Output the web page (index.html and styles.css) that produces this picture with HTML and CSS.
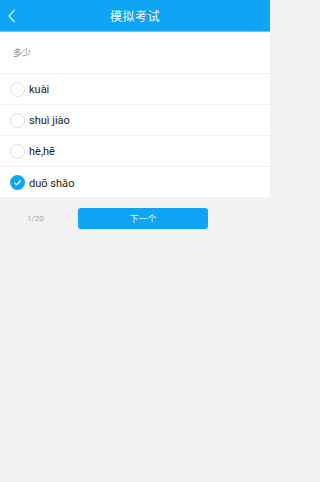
FILE: index.html
```html
<!DOCTYPE html>
<html lang="zh">
<head>
<meta charset="utf-8">
<link rel="stylesheet" href="styles.css">
</head>
<body>
<div class="app">
  <header class="topbar">
    <svg class="back" width="10" height="16" viewBox="0 0 10 16"><path d="M7.5 2 L2 8 L7.5 14" fill="none" stroke="#cfeeff" stroke-width="1.3"/></svg>
    <div class="title">模拟考试</div>
  </header>
  <div class="question">多少</div>
  <ul class="options">
    <li class="opt"><span class="radio"></span><span class="label">kuài</span></li>
    <li class="opt"><span class="radio"></span><span class="label">shuì jiào</span></li>
    <li class="opt"><span class="radio"></span><span class="label">hè,hē</span></li>
    <li class="opt"><span class="radio checked"><svg width="15" height="15" viewBox="0 0 15 15"><path d="M4.2 7.6 L6.6 9.9 L10.9 5.3" fill="none" stroke="#fff" stroke-width="1.3"/></svg></span><span class="label">duō shǎo</span></li>
  </ul>
  <div class="footer">
    <span class="count">1/20</span>
    <button class="next">下一个</button>
  </div>
</div>
</body>
</html>
```
FILE: styles.css
```css
html, body {
  margin: 0;
  padding: 0;
  background: #f2f2f2;
  font-family: Roboto, "Noto Sans", "Noto Sans CJK SC", sans-serif;
}
.app {
  width: 270px;
  height: 482px;
  display: flex;
  flex-direction: column;
  background: #f2f2f2;
}
.topbar {
  height: 31px;
  background: #0ea6f4;
  display: flex;
  align-items: center;
  justify-content: center;
  position: relative;
  border-bottom: 1px solid #6fc8f7;
}
.back {
  position: absolute;
  left: 7px;
  top: 8px;
}
.title {
  color: #f4fbff;
  font-size: 12px;
  font-family: "Noto Sans CJK SC", sans-serif;
  letter-spacing: 0.5px;
}
.question {
  background: #fff;
  height: 42px;
  box-sizing: border-box;
  padding-left: 13px;
  display: flex;
  align-items: center;
  font-size: 9px;
  color: #8a8a8a;
  font-family: "Noto Sans CJK SC", sans-serif;
  border-bottom: 1px solid #ececec;
}
.options {
  list-style: none;
  margin: 0;
  padding: 0;
  background: #fff;
}
.opt {
  height: 31px;
  box-sizing: border-box;
  display: flex;
  align-items: center;
  padding-left: 10px;
  gap: 4px;
  border-bottom: 1px solid #efefef;
}
.opt:last-child {
  border-bottom: none;
  height: 30px;
}
.radio {
  width: 15px;
  height: 15px;
  box-sizing: border-box;
  border: 1px solid #dcdcdc;
  border-radius: 50%;
  display: flex;
  align-items: center;
  justify-content: center;
}
.radio.checked {
  border: none;
  background: #0ea6f4;
}
.label {
  font-size: 11px;
  color: #222;
}
.footer {
  display: flex;
  align-items: center;
  padding-top: 11px;
  height: 21px;
}
.count {
  width: 78px;
  padding-left: 27px;
  box-sizing: border-box;
  font-size: 8px;
  color: #aaa;
}
.next {
  width: 130px;
  height: 21px;
  border: none;
  border-radius: 3px;
  background: #0ea6f4;
  color: #e8f6ff;
  font-size: 9px;
  font-family: "Noto Sans CJK SC", sans-serif;
  padding: 0;
}
```
